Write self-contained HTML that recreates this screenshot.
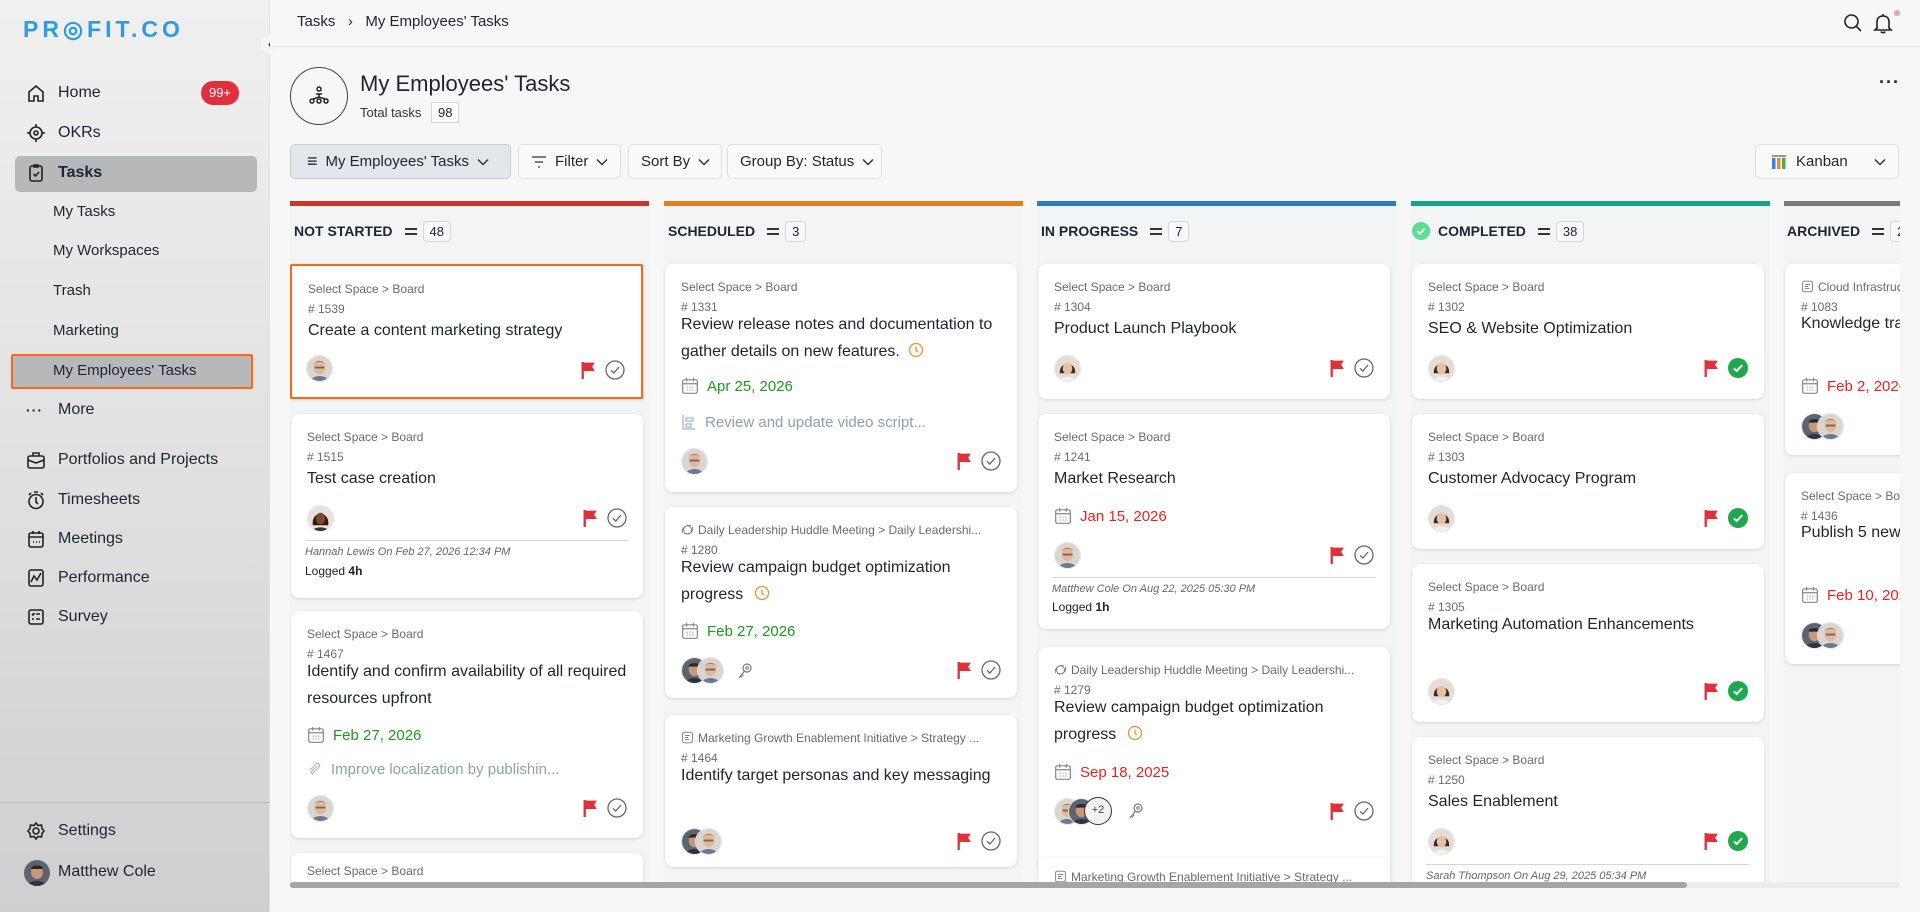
<!DOCTYPE html>
<html><head><meta charset="utf-8">
<style>
*{box-sizing:border-box;margin:0;padding:0}
body{width:1920px;height:912px;overflow:hidden;font-family:"Liberation Sans",Arial,sans-serif;background:#f7f7f8;position:relative;color:#1d2433}
#side{position:absolute;left:0;top:0;width:270px;height:912px;background:linear-gradient(180deg,#f0f0f0 0%,#dedede 60%,#cfcfd1 100%);border-right:1px solid #e2e2e2}
.logo{position:absolute;left:23px;top:16px;font-size:23px;font-weight:bold;letter-spacing:4px;color:#2e9be6}
.ni{position:absolute;left:26px;font-size:16px;color:#1d2433;display:flex;align-items:center;gap:12px;height:24px}
.ni svg{width:20px;height:20px;stroke:#222;fill:none;stroke-width:1.6}
.sub{position:absolute;left:53px;font-size:15px;color:#1d2433;line-height:20px}
#hdr{position:absolute;left:270px;top:0;right:0;height:47px;border-bottom:1px solid #e6e6e6;background:#f7f7f7}
.a{position:absolute}
.col{position:absolute;top:201px;width:359px;height:720px;background:#f3f4f6}
.bar{position:absolute;left:0;top:0;height:5px;width:100%}
.ch{position:absolute;left:4px;top:219px;display:flex;align-items:center;font-size:14px;font-weight:bold;height:24px}
.cnt{display:inline-block;border:1px solid #d3d7dd;border-radius:4px;font-size:13px;font-weight:normal;padding:2px 6px;margin-left:6px;background:#f7f8fa}
.eq{display:inline-block;width:12px;height:7px;border-top:2px solid #333;border-bottom:2px solid #333;margin-left:12px}
.card{position:absolute;left:1px;width:352px;background:#fff;border-radius:8px;box-shadow:0 1px 3px rgba(0,0,0,.13)}
.sp,.id{position:absolute;left:16px;right:16px;font-size:12px;color:#6b6b6b;line-height:20px;white-space:nowrap;overflow:hidden;text-overflow:ellipsis}
.sp{top:13px}.id{top:33px}
.tt{position:absolute;left:16px;right:14px;font-size:16px;line-height:27px;color:#1d2433}
.dt{position:absolute;left:16px;font-size:15px;display:flex;align-items:center;gap:8px;height:24px}
.g{color:#1b9a1b}.r{color:#f01f1f}
.st{position:absolute;left:16px;font-size:15px;color:#8ca0b6;display:flex;align-items:center;gap:8px;height:24px}
.av{position:absolute;width:27px;height:27px;border-radius:50%;border:1px solid #e5e5e5;overflow:hidden}
.flag{position:absolute;right:45px;width:15px;height:19px}
.chk{position:absolute;right:16px;width:20px;height:20px}
.dv{position:absolute;left:14px;right:14px;border-top:1px solid #d6d6d6}
.nm{position:absolute;left:14px;font-size:11px;font-style:italic;color:#666;line-height:16px}
.lg{position:absolute;left:14px;font-size:12px;color:#222;line-height:16px}
.btn{position:absolute;top:144px;height:35px;border:1px solid #dcdfe3;border-radius:5px;background:#fafafa;display:flex;align-items:center;font-size:15px;color:#1d2433;padding:0 12px;gap:8px;white-space:nowrap}
.btn svg{flex-shrink:0}
.chev{width:12px;height:8px}
</style></head><body>
<svg width="0" height="0" style="position:absolute">
<defs>
<symbol id="flag" viewBox="0 0 14 18"><path d="M1.5 1V17" stroke="#e0313b" stroke-width="2.2"/><path d="M2 1.5H13L10.5 5.5L13 9.5H2Z" fill="#e0313b"/></symbol>
<symbol id="chk" viewBox="0 0 20 20"><circle cx="10" cy="10" r="9" fill="none" stroke="#666" stroke-width="1.3"/><path d="M6 10.3L8.8 13L14 7" fill="none" stroke="#666" stroke-width="1.3"/></symbol>
<symbol id="gchk" viewBox="0 0 20 20"><circle cx="10" cy="10" r="10" fill="#1fa84e"/><path d="M5.8 10.3L8.7 13L14.2 7.2" fill="none" stroke="#fff" stroke-width="2"/></symbol>
<symbol id="cal" viewBox="0 0 16 16"><rect x="1.5" y="2.5" width="13" height="12" rx="1.5" fill="none" stroke="#888" stroke-width="1.1"/><path d="M1.5 6H14.5M5 1V4M11 1V4" stroke="#888" stroke-width="1.1"/><path d="M5 9h1M7.5 9h1M10 9h1M5 11.5h1M7.5 11.5h1M10 11.5h1" stroke="#999" stroke-width="1"/></symbol>
<symbol id="man" viewBox="0 0 26 26"><rect width="26" height="26" fill="#d9d6d2"/><ellipse cx="13" cy="12" rx="6" ry="7" fill="#e2b79a"/><path d="M7 9C7 4 19 4 19 9L18 7C15 6 11 6 8 7Z" fill="#b7703f"/><rect x="8" y="11" width="10" height="2" fill="#333" opacity=".6"/><path d="M4 26C5 19 21 19 22 26Z" fill="#6a7890"/></symbol>
<symbol id="wom" viewBox="0 0 26 26"><rect width="26" height="26" fill="#e3ddd5"/><path d="M5 18C4 5 22 5 21 18Z" fill="#3e2a20"/><ellipse cx="13" cy="13" rx="5" ry="6" fill="#e7c0a3"/><path d="M5 26C6 20 20 20 21 26Z" fill="#f2f2f2"/></symbol>
<symbol id="blk" viewBox="0 0 26 26"><rect width="26" height="26" fill="#e9e2da"/><path d="M5 20C3 4 23 4 21 20Z" fill="#2a1a12"/><ellipse cx="13" cy="13" rx="5" ry="6" fill="#7a4a2e"/><path d="M5 26C6 21 20 21 21 26Z" fill="#333"/></symbol>
<symbol id="dk" viewBox="0 0 26 26"><rect width="26" height="26" fill="#5b6470"/><ellipse cx="13" cy="12" rx="6" ry="7" fill="#c99878"/><path d="M7 9C7 4 19 4 19 9Z" fill="#2a2a2a"/><path d="M4 26C5 19 21 19 22 26Z" fill="#2e3440"/></symbol>
<symbol id="key" viewBox="0 0 16 18"><circle cx="10" cy="6" r="4" fill="none" stroke="#777" stroke-width="1.2"/><circle cx="10" cy="6" r="1.3" fill="none" stroke="#777"/><path d="M7.5 9L2 16M3.5 14L5 15.5M4.8 12.5L6.3 14" stroke="#777" stroke-width="1.2" fill="none"/></symbol>
<symbol id="clk" viewBox="0 0 16 16"><circle cx="8" cy="8" r="6.5" fill="none" stroke="#f0922b" stroke-width="1.3"/><path d="M8 4.5V8.5L10 10" fill="none" stroke="#f0922b" stroke-width="1.3"/></symbol>
<symbol id="sub" viewBox="0 0 16 16"><path d="M2 1V15H14M5 4H12V7H5ZM5 10H10V13H5Z" fill="none" stroke="#9fb3c8" stroke-width="1.2"/></symbol>
<symbol id="doc" viewBox="0 0 16 16"><rect x="2" y="1.5" width="12" height="13" rx="2" fill="none" stroke="#777" stroke-width="1.1"/><path d="M5 5.5H11M5 8H9M5 10.5H10" stroke="#777" stroke-width="1.1"/></symbol>
<symbol id="meet" viewBox="0 0 16 16"><circle cx="8" cy="8.5" r="5" fill="none" stroke="#777" stroke-width="1.1"/><path d="M2 12C0 8 5 2 12 3M14 5C16 9 11 15 4 13" fill="none" stroke="#777" stroke-width="1.1"/></symbol>
<symbol id="cv" viewBox="0 0 12 8"><path d="M1 1.5L6 6.5L11 1.5" fill="none" stroke="#333" stroke-width="1.5"/></symbol>
</defs></svg>

<div id="side">
 <div class="logo">PR<span style="letter-spacing:4px">◎</span>FIT.CO</div>
 <div class="a" style="left:261px;top:35px;width:18px;height:18px;border-radius:50%;background:#f4f4f4;font-size:12px;text-align:center;line-height:18px;font-weight:bold">‹</div>
 <div class="ni" style="top:81px"><svg viewBox="0 0 20 20"><path d="M3 9L10 3L17 9V18H12V13H8V18H3Z"/></svg>Home</div>
 <div class="a" style="left:201px;top:81px;width:38px;height:24px;border-radius:12px;background:#e0303f;color:#fff;font-size:13px;text-align:center;line-height:24px">99+</div>
 <div class="ni" style="top:121px"><svg viewBox="0 0 20 20"><circle cx="10" cy="10" r="6"/><circle cx="10" cy="10" r="2"/><path d="M10 1V4M10 16V19M1 10H4M16 10H19"/></svg>OKRs</div>
 <div class="a" style="left:15px;top:156px;width:242px;height:36px;border-radius:5px;background:#b7b8ba"></div>
 <div class="ni" style="top:161px;font-weight:bold"><svg viewBox="0 0 20 20"><rect x="4" y="3" width="12" height="15" rx="2"/><path d="M8 2H12V4H8ZM7.5 11L9.5 13L13 9"/></svg>Tasks</div>
 <div class="sub" style="top:202px">My Tasks</div>
 <div class="sub" style="top:241px">My Workspaces</div>
 <div class="sub" style="top:281px">Trash</div>
 <div class="sub" style="top:321px">Marketing</div>
 <div class="a" style="left:11px;top:354px;width:242px;height:35px;background:#b7b8ba;border:2px solid #ff6512;border-radius:2px"></div>
 <div class="sub" style="top:361px">My Employees' Tasks</div>
 <div class="ni" style="top:398px"><span style="width:20px;font-size:14px;letter-spacing:1px;font-weight:bold">···</span>More</div>
 <div class="ni" style="top:448px"><svg viewBox="0 0 20 20"><rect x="2" y="6" width="16" height="12" rx="2"/><path d="M7 6V3H13V6M2 10L10 13L18 10"/></svg>Portfolios and Projects</div>
 <div class="ni" style="top:488px"><svg viewBox="0 0 20 20"><circle cx="10" cy="11.5" r="7"/><path d="M10 7V12L12 14M8 2H12M3 5L5 3M17 5L15 3"/></svg>Timesheets</div>
 <div class="ni" style="top:527px"><svg viewBox="0 0 20 20"><rect x="3" y="4" width="14" height="14" rx="2"/><path d="M3 8H17M7 2V5M13 2V5M7 13H8M10 13H11M13 13H14"/></svg>Meetings</div>
 <div class="ni" style="top:566px"><svg viewBox="0 0 20 20"><rect x="3" y="2" width="14" height="16" rx="2"/><path d="M5 14L8 8L11 12L15 5"/></svg>Performance</div>
 <div class="ni" style="top:605px"><svg viewBox="0 0 20 20"><rect x="3" y="3" width="14" height="14" rx="2"/><path d="M6 7L7 8L8.5 6M10 7H14M6 12H8M10 12H14"/></svg>Survey</div>
 <div class="a" style="left:0;top:802px;width:270px;border-top:1px solid #b9b9b9"></div>
 <div class="ni" style="top:819px"><svg viewBox="0 0 20 20"><circle cx="10" cy="10" r="3"/><path d="M10 2L12 4.5L15.5 4L16 7.5L18 10L16 12.5L15.5 16L12 15.5L10 18L8 15.5L4.5 16L4 12.5L2 10L4 7.5L4.5 4L8 4.5Z"/></svg>Settings</div>
 <svg class="a" style="left:24px;top:860px;width:26px;height:26px;border-radius:50%" viewBox="0 0 26 26"><use href="#dk"/></svg>
 <div class="a" style="left:58px;top:863px;font-size:16px">Matthew Cole</div>
</div>

<div id="hdr">
 <div class="a" style="left:27px;top:13px;font-size:15px">Tasks&nbsp;&nbsp;&nbsp;›&nbsp;&nbsp;&nbsp;My Employees' Tasks</div>
 <svg class="a" style="left:1573px;top:13px;width:20px;height:20px" viewBox="0 0 20 20"><circle cx="8.5" cy="8.5" r="6.5" fill="none" stroke="#222" stroke-width="1.6"/><path d="M13.5 13.5L18 18" stroke="#222" stroke-width="1.6"/></svg>
 <svg class="a" style="left:1603px;top:12px;width:20px;height:22px" viewBox="0 0 20 22"><path d="M4 16V10C4 6 6.5 4 10 4C13.5 4 16 6 16 10V16L18 18H2Z M8 19.5C8.5 21 11.5 21 12 19.5M10 2V4" fill="none" stroke="#222" stroke-width="1.6"/></svg>
 <div class="a" style="left:1624px;top:10px;width:6px;height:6px;border-radius:50%;background:#f3a0a8"></div>
</div>

<div class="a" style="left:290px;top:67px;width:58px;height:58px;border-radius:50%;border:1.5px solid #444;background:#f7f7f7"></div>
<svg class="a" style="left:307px;top:84px;width:24px;height:24px" viewBox="0 0 24 24"><g fill="none" stroke="#222" stroke-width="1.5"><circle cx="12" cy="5" r="2"/><path d="M9 10H15M12 10V13M6 15L12 13L18 15"/><circle cx="5" cy="17" r="2"/><circle cx="12" cy="17" r="2"/><circle cx="19" cy="17" r="2"/></g></svg>
<div class="a" style="left:360px;top:71px;font-size:22px;font-weight:500">My Employees' Tasks</div>
<div class="a" style="left:360px;top:105px;font-size:13px;color:#333">Total tasks</div>
<div class="a" style="left:431px;top:102px;border:1px solid #d6d6d6;background:#fff;font-size:13px;padding:2px 6px">98</div>
<div class="a" style="left:1879px;top:72px;font-size:18px;font-weight:bold;letter-spacing:1px">···</div>

<div class="btn" style="left:290px;width:221px;background:#e3e6ea;border-color:#c9cdd2;padding-left:16px"><span style="font-size:18px">≡</span>My Employees' Tasks<svg class="chev" viewBox="0 0 12 8"><use href="#cv"/></svg></div>
<div class="btn" style="left:518px;width:103px"><svg width="16" height="12" viewBox="0 0 16 12"><path d="M1 1H15M4 6H12M7 11H9" stroke="#333" stroke-width="1.3"/></svg>Filter<svg class="chev" viewBox="0 0 12 8"><use href="#cv"/></svg></div>
<div class="btn" style="left:628px;width:94px">Sort By<svg class="chev" viewBox="0 0 12 8"><use href="#cv"/></svg></div>
<div class="btn" style="left:727px;width:155px">Group By: Status<svg class="chev" viewBox="0 0 12 8"><use href="#cv"/></svg></div>
<div class="btn" style="left:1755px;width:144px;gap:10px;padding-left:16px"><svg width="14" height="14" viewBox="0 0 14 14"><rect x="0" y="0" width="14" height="2" fill="#999"/><rect x="0" y="3" width="3.5" height="11" fill="#2e86de"/><rect x="5" y="3" width="3.5" height="11" fill="#f08a24"/><rect x="10" y="3" width="3.5" height="11" fill="#4cae4c"/></svg>Kanban<svg class="chev" style="margin-left:auto" viewBox="0 0 12 8"><use href="#cv"/></svg></div>

<div class="a" style="left:290px;top:0;width:1610px;height:884px;overflow:hidden">
<!-- COL 1 -->
<div class="col" style="left:0"><div class="bar" style="background:#c8362c"></div></div>
<div class="ch" style="left:4px">NOT STARTED<span class="eq"></span><span class="cnt">48</span></div>
<div class="card" style="left:0;top:264px;height:135px;width:353px;border:2px solid #ff6512;border-radius:2px">
 <div class="sp">Select Space &gt; Board</div><div class="id"># 1539</div><div class="tt" style="top:51px">Create a content marketing strategy</div>
 <svg class="av" style="left:14px;top:89px" viewBox="0 0 26 26"><use href="#man"/></svg>
 <svg class="flag" style="top:95px" viewBox="0 0 14 18"><use href="#flag"/></svg><svg class="chk" style="top:94px" viewBox="0 0 20 20"><use href="#chk"/></svg>
</div>
<div class="card" style="top:414px;height:184px">
 <div class="sp">Select Space &gt; Board</div><div class="id"># 1515</div><div class="tt" style="top:51px">Test case creation</div>
 <svg class="av" style="left:16px;top:91px" viewBox="0 0 26 26"><use href="#blk"/></svg>
 <svg class="flag" style="top:95px" viewBox="0 0 14 18"><use href="#flag"/></svg><svg class="chk" style="top:94px" viewBox="0 0 20 20"><use href="#chk"/></svg>
 <div class="dv" style="top:126px"></div><div class="nm" style="top:130px">Hannah Lewis On Feb 27, 2026 12:34 PM</div><div class="lg" style="top:149px">Logged <b>4h</b></div>
</div>
<div class="card" style="top:611px;height:227px">
 <div class="sp">Select Space &gt; Board</div><div class="id"># 1467</div><div class="tt" style="top:47px">Identify and confirm availability of all required resources upfront</div>
 <div class="dt g" style="top:112px"><svg width="18" height="18"><use href="#cal"/></svg>Feb 27, 2026</div>
 <div class="st" style="top:146px"><svg width="16" height="16" viewBox="0 0 16 16"><path d="M3 9L9 3C11 1 14 4 12 6L6 12C5 13 3.5 11.5 4.5 10.5L10 5" fill="none" stroke="#a8b8c8" stroke-width="1.1"/></svg>Improve localization by publishin...</div>
 <svg class="av" style="left:16px;top:184px" viewBox="0 0 26 26"><use href="#man"/></svg>
 <svg class="flag" style="top:188px" viewBox="0 0 14 18"><use href="#flag"/></svg><svg class="chk" style="top:187px" viewBox="0 0 20 20"><use href="#chk"/></svg>
</div>
<div class="card" style="top:853px;height:100px"><div class="sp" style="top:8px">Select Space &gt; Board</div></div>

<!-- COL 2 -->
<div class="col" style="left:374px"><div class="bar" style="background:#e47d22"></div></div>
<div class="ch" style="left:378px">SCHEDULED<span class="eq"></span><span class="cnt">3</span></div>
<div class="card" style="left:375px;top:264px;height:228px">
 <div class="sp">Select Space &gt; Board</div><div class="id"># 1331</div><div class="tt" style="top:47px">Review release notes and documentation to gather details on new features. <svg width="16" height="16" style="vertical-align:-2px;margin-left:4px"><use href="#clk"/></svg></div>
 <div class="dt g" style="top:110px"><svg width="18" height="18"><use href="#cal"/></svg>Apr 25, 2026</div>
 <div class="st" style="top:146px"><svg width="16" height="16"><use href="#sub"/></svg>Review and update video script...</div>
 <svg class="av" style="left:16px;top:184px" viewBox="0 0 26 26"><use href="#man"/></svg>
 <svg class="flag" style="top:188px" viewBox="0 0 14 18"><use href="#flag"/></svg><svg class="chk" style="top:187px" viewBox="0 0 20 20"><use href="#chk"/></svg>
</div>
<div class="card" style="left:375px;top:507px;height:191px">
 <div class="sp"><svg width="13" height="13" style="vertical-align:-2px;margin-right:4px"><use href="#meet"/></svg>Daily Leadership Huddle Meeting &gt; Daily Leadershi...</div><div class="id"># 1280</div><div class="tt" style="top:47px">Review campaign budget optimization progress <svg width="16" height="16" style="vertical-align:-2px;margin-left:6px"><use href="#clk"/></svg></div>
 <div class="dt g" style="top:112px"><svg width="18" height="18"><use href="#cal"/></svg>Feb 27, 2026</div>
 <svg class="av" style="left:16px;top:150px" viewBox="0 0 26 26"><use href="#dk"/></svg><svg class="av" style="left:32px;top:150px" viewBox="0 0 26 26"><use href="#man"/></svg>
 <svg class="a" style="left:72px;top:155px;width:16px;height:18px"><use href="#key"/></svg>
 <svg class="flag" style="top:154px" viewBox="0 0 14 18"><use href="#flag"/></svg><svg class="chk" style="top:153px" viewBox="0 0 20 20"><use href="#chk"/></svg>
</div>
<div class="card" style="left:375px;top:715px;height:152px">
 <div class="sp"><svg width="13" height="13" style="vertical-align:-2px;margin-right:4px"><use href="#doc"/></svg>Marketing Growth Enablement Initiative &gt; Strategy ...</div><div class="id"># 1464</div><div class="tt" style="top:47px">Identify target personas and key messaging</div>
 <svg class="av" style="left:16px;top:113px" viewBox="0 0 26 26"><use href="#dk"/></svg><svg class="av" style="left:30px;top:113px" viewBox="0 0 26 26"><use href="#man"/></svg>
 <svg class="flag" style="top:117px" viewBox="0 0 14 18"><use href="#flag"/></svg><svg class="chk" style="top:116px" viewBox="0 0 20 20"><use href="#chk"/></svg>
</div>

<!-- COL 3 -->
<div class="col" style="left:747px"><div class="bar" style="background:#2a7fc0"></div></div>
<div class="ch" style="left:751px">IN PROGRESS<span class="eq"></span><span class="cnt">7</span></div>
<div class="card" style="left:748px;top:264px;height:135px">
 <div class="sp">Select Space &gt; Board</div><div class="id"># 1304</div><div class="tt" style="top:51px">Product Launch Playbook</div>
 <svg class="av" style="left:16px;top:91px" viewBox="0 0 26 26"><use href="#wom"/></svg>
 <svg class="flag" style="top:95px" viewBox="0 0 14 18"><use href="#flag"/></svg><svg class="chk" style="top:94px" viewBox="0 0 20 20"><use href="#chk"/></svg>
</div>
<div class="card" style="left:748px;top:414px;height:215px">
 <div class="sp">Select Space &gt; Board</div><div class="id"># 1241</div><div class="tt" style="top:51px">Market Research</div>
 <div class="dt r" style="top:90px"><svg width="18" height="18"><use href="#cal"/></svg>Jan 15, 2026</div>
 <svg class="av" style="left:16px;top:128px" viewBox="0 0 26 26"><use href="#man"/></svg>
 <svg class="flag" style="top:132px" viewBox="0 0 14 18"><use href="#flag"/></svg><svg class="chk" style="top:131px" viewBox="0 0 20 20"><use href="#chk"/></svg>
 <div class="dv" style="top:163px"></div><div class="nm" style="top:167px">Matthew Cole On Aug 22, 2025 05:30 PM</div><div class="lg" style="top:185px">Logged <b>1h</b></div>
</div>
<div class="card" style="left:748px;top:647px;height:223px">
 <div class="sp"><svg width="13" height="13" style="vertical-align:-2px;margin-right:4px"><use href="#meet"/></svg>Daily Leadership Huddle Meeting &gt; Daily Leadershi...</div><div class="id"># 1279</div><div class="tt" style="top:47px">Review campaign budget optimization progress <svg width="16" height="16" style="vertical-align:-2px;margin-left:6px"><use href="#clk"/></svg></div>
 <div class="dt r" style="top:113px"><svg width="18" height="18"><use href="#cal"/></svg>Sep 18, 2025</div>
 <svg class="av" style="left:16px;top:151px" viewBox="0 0 26 26"><use href="#man"/></svg><svg class="av" style="left:30px;top:151px" viewBox="0 0 26 26"><use href="#dk"/></svg>
 <div class="a" style="left:46px;top:150px;width:28px;height:28px;border-radius:50%;border:1.5px solid #333;background:#f2f2f2;font-size:11px;text-align:center;line-height:25px;color:#444">+2</div>
 <svg class="a" style="left:90px;top:155px;width:16px;height:18px"><use href="#key"/></svg>
 <svg class="flag" style="top:155px" viewBox="0 0 14 18"><use href="#flag"/></svg><svg class="chk" style="top:154px" viewBox="0 0 20 20"><use href="#chk"/></svg>
</div>
<div class="card" style="left:748px;top:857px;height:100px"><div class="sp" style="top:10px"><svg width="13" height="13" style="vertical-align:-2px;margin-right:4px"><use href="#doc"/></svg>Marketing Growth Enablement Initiative &gt; Strategy ...</div></div>

<!-- COL 4 -->
<div class="col" style="left:1121px"><div class="bar" style="background:#17a385"></div></div>
<div class="ch" style="left:1122px"><svg width="18" height="18" style="margin-right:8px" viewBox="0 0 20 20"><circle cx="10" cy="10" r="10" fill="#5fdc95"/><path d="M5.8 10.3L8.7 13L14.2 7.2" fill="none" stroke="#fff" stroke-width="2"/></svg>COMPLETED<span class="eq"></span><span class="cnt">38</span></div>
<div class="card" style="left:1122px;top:264px;height:135px">
 <div class="sp">Select Space &gt; Board</div><div class="id"># 1302</div><div class="tt" style="top:51px">SEO &amp; Website Optimization</div>
 <svg class="av" style="left:16px;top:91px" viewBox="0 0 26 26"><use href="#wom"/></svg>
 <svg class="flag" style="top:95px" viewBox="0 0 14 18"><use href="#flag"/></svg><svg class="chk" style="top:94px" viewBox="0 0 20 20"><use href="#gchk"/></svg>
</div>
<div class="card" style="left:1122px;top:414px;height:135px">
 <div class="sp">Select Space &gt; Board</div><div class="id"># 1303</div><div class="tt" style="top:51px">Customer Advocacy Program</div>
 <svg class="av" style="left:16px;top:91px" viewBox="0 0 26 26"><use href="#wom"/></svg>
 <svg class="flag" style="top:95px" viewBox="0 0 14 18"><use href="#flag"/></svg><svg class="chk" style="top:94px" viewBox="0 0 20 20"><use href="#gchk"/></svg>
</div>
<div class="card" style="left:1122px;top:564px;height:158px">
 <div class="sp">Select Space &gt; Board</div><div class="id"># 1305</div><div class="tt" style="top:47px">Marketing Automation Enhancements</div>
 <svg class="av" style="left:16px;top:114px" viewBox="0 0 26 26"><use href="#wom"/></svg>
 <svg class="flag" style="top:118px" viewBox="0 0 14 18"><use href="#flag"/></svg><svg class="chk" style="top:117px" viewBox="0 0 20 20"><use href="#gchk"/></svg>
</div>
<div class="card" style="left:1122px;top:737px;height:160px">
 <div class="sp">Select Space &gt; Board</div><div class="id"># 1250</div><div class="tt" style="top:51px">Sales Enablement</div>
 <svg class="av" style="left:16px;top:91px" viewBox="0 0 26 26"><use href="#wom"/></svg>
 <svg class="flag" style="top:95px" viewBox="0 0 14 18"><use href="#flag"/></svg><svg class="chk" style="top:94px" viewBox="0 0 20 20"><use href="#gchk"/></svg>
 <div class="dv" style="top:127px"></div><div class="nm" style="top:131px">Sarah Thompson On Aug 29, 2025 05:34 PM</div>
</div>

<!-- COL 5 -->
<div class="col" style="left:1494px;width:116px"><div class="bar" style="background:#7a7a7a"></div></div>
<div class="ch" style="left:1497px">ARCHIVED<span class="eq"></span><span class="cnt">2</span></div>
<div class="card" style="left:1495px;top:264px;height:191px">
 <div class="sp"><svg width="13" height="13" style="vertical-align:-2px;margin-right:4px"><use href="#doc"/></svg>Cloud Infrastructure</div><div class="id"># 1083</div><div class="tt" style="top:46px;white-space:nowrap">Knowledge transfer</div>
 <div class="dt r" style="top:110px"><svg width="18" height="18"><use href="#cal"/></svg>Feb 2, 2026</div>
 <svg class="av" style="left:16px;top:149px" viewBox="0 0 26 26"><use href="#dk"/></svg><svg class="av" style="left:32px;top:149px" viewBox="0 0 26 26"><use href="#man"/></svg>
</div>
<div class="card" style="left:1495px;top:473px;height:191px">
 <div class="sp">Select Space &gt; Board</div><div class="id"># 1436</div><div class="tt" style="top:46px;white-space:nowrap">Publish 5 new blog posts</div>
 <div class="dt r" style="top:110px"><svg width="18" height="18"><use href="#cal"/></svg>Feb 10, 2026</div>
 <svg class="av" style="left:16px;top:149px" viewBox="0 0 26 26"><use href="#dk"/></svg><svg class="av" style="left:32px;top:149px" viewBox="0 0 26 26"><use href="#man"/></svg>
</div>
</div>
<div class="a" style="left:290px;top:882px;width:1610px;height:6px;background:#ececec;border-radius:3px"></div>
<div class="a" style="left:290px;top:882px;width:1397px;height:6px;background:#a5a5a5;border-radius:3px"></div>
</body></html>
